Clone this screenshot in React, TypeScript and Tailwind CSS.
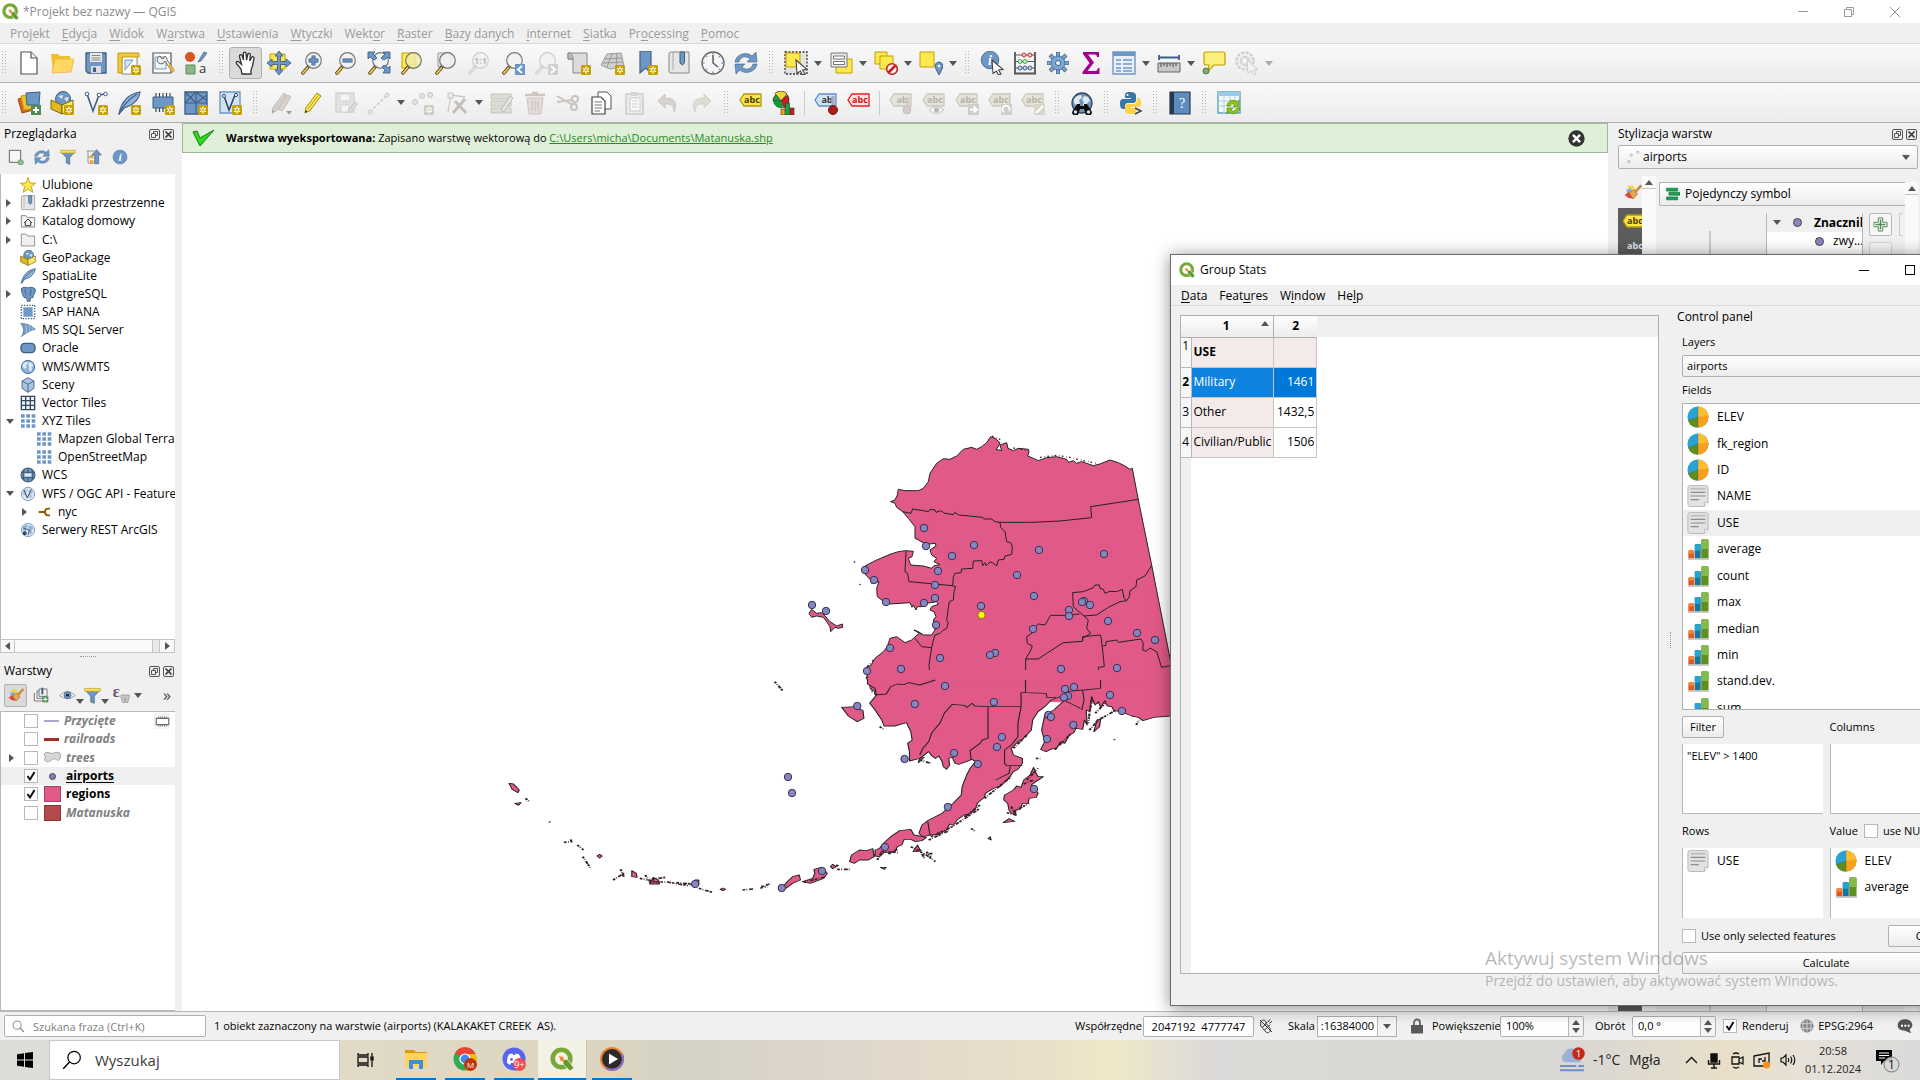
import type { ReactNode } from "react";

/* ---------- shared colours used inside drawings ---------- */
const BLUE = "#6d97c4";
const DARK = "#3f5f85";
const GOLD = "#c4a000";
const YEL = "#fce94f";
const GREY = "#6b6b6b";
const LIGHT = "#d3d3d3";

function Svg({ s = 24, children }: { s?: number; children: ReactNode }) {
  return (
    <svg width={s} height={s} viewBox="0 0 24 24" fill="none" className="shrink-0">
      {children}
    </svg>
  );
}

function Badge({ x = 14, y = 14, c = GOLD }: { x?: number; y?: number; c?: string }) {
  return (
    <g transform={`translate(${x} ${y})`}>
      <rect width="10" height="10" rx="1.5" fill={c} />
      <path d="M5 1.5V8.5M2 3.2L8 6.8M8 3.2L2 6.8" stroke="#fff" strokeWidth="1.3" />
      <circle cx="5" cy="5" r="1" fill={c} />
    </g>
  );
}

function Lens({ fill = "#eef1f3", pale = false, children }: { fill?: string; pale?: boolean; children?: ReactNode }) {
  return (
    <g>
      <path d="M8.5 15.5L3 22" stroke={pale ? "#c8c8c8" : "#222"} strokeWidth="3.4" strokeLinecap="round" />
      <path d="M7.5 16.8L3 22" stroke={pale ? "#e0e0e0" : "#f2c430"} strokeWidth="2" strokeLinecap="round" />
      <circle cx="13.5" cy="9.5" r="7.8" fill={fill} fillOpacity="0.85" stroke={pale ? "#cfcfcf" : "#777"} strokeWidth="1.2" />
      {children}
    </g>
  );
}

function Pencil({ body, edge, tip = "#333" }: { body: string; edge: string; tip?: string }) {
  return (
    <g>
      <path d="M5 16.5L16 2L20 5L9 19.5L4 22Z" fill={body} stroke={edge} strokeWidth="1" />
      <path d="M4 22L4.6 19L6.5 20.6Z" fill={tip} />
      <path d="M7 18L18 3.5" stroke={edge} strokeWidth="0.8" />
    </g>
  );
}

function Tag({ fill, edge, text, color, y = 3 }: { fill: string; edge: string; text: string; color: string; y?: number }) {
  return (
    <g>
      <path d={`M1 ${y + 6}L5 ${y}H22V${y + 12}H5Z`} fill={fill} stroke={edge} strokeWidth="1.3" />
      <text x="13" y={y + 9} fontSize="9" fontWeight="700" textAnchor="middle" fill={color} fontFamily="Open Sans, sans-serif">
        {text}
      </text>
    </g>
  );
}

function Globe({ fill = "#8fb2d8", edge = DARK, land = "#dfe9f4" }: { fill?: string; edge?: string; land?: string }) {
  return (
    <g>
      <circle cx="12" cy="12" r="10" fill={fill} stroke={edge} strokeWidth="1.3" />
      <path d="M4 8C6 5 9 4 11 4L12 7L9 9L10 12L7 15L4 12ZM14 5L18 6L20 10L17 12L18 16L15 19L13 14L14 11L12 9Z" fill={land} />
    </g>
  );
}

const cursor = <path d="M12 9L23 18.5L18.5 19L21 23L18.6 24L16.4 20L13 22.5Z" fill="#fff" stroke="#444" strokeWidth="1.1" />;

const icons: Record<string, ReactNode> = {
  newProject: (
    <>
      <path d="M4 1H14L20 7V23H4Z" fill="#fff" stroke="#555" strokeWidth="1.2" />
      <path d="M14 1V7H20" fill="#eee" stroke="#555" strokeWidth="1.2" />
    </>
  ),
  open: (
    <>
      <path d="M1 3H8L10 5H20V21H3Z" fill="#f2bf2c" />
      <path d="M5 8H24L21 21L2 22Z" fill="#ffd761" stroke="#e8b53a" strokeWidth="0.8" />
    </>
  ),
  save: (
    <>
      <path d="M2 2H22V22H4L2 20Z" fill={BLUE} stroke={DARK} strokeWidth="1.3" />
      <path d="M6 2H18V11H6Z" fill="#e8e8e8" />
      <path d="M7.5 4.5H16.5M7.5 7H16.5M7.5 9H16.5" stroke="#888" strokeWidth="1" />
      <path d="M7 15H17V22H7Z" fill="#ddd" />
      <path d="M9 16.5H12V21H9Z" fill={DARK} />
    </>
  ),
  layout: (
    <>
      <path d="M5 5H20V23H5Z" fill="#fff" stroke="#888" />
      <path d="M1 2H22V6H5V22H1Z" fill="#f1c64a" stroke={GOLD} />
      <path d="M8 9H16L8 19Z" fill="#dbe6f2" stroke={BLUE} />
      <Badge />
    </>
  ),
  layouts: (
    <>
      <path d="M2 2H20V22H2Z" fill="#fff" stroke="#555" strokeWidth="1.2" />
      <path d="M4 6H15V18H4Z" stroke={BLUE} fill="#eef3f9" />
      <path d="M9 5A4 4 0 1 0 14 10L21 21L23 19L16 9A4 4 0 0 0 14 5L12 8L10 7Z" fill="#eee" stroke="#666" />
      <path d="M17 15L21.5 22L24 20L19 13Z" fill="#e6b43a" />
    </>
  ),
  styles: (
    <>
      <circle cx="6" cy="6" r="5" fill="#d9541e" />
      <path d="M14 11L20 1L23 2L17 10Z" fill={BLUE} stroke={DARK} strokeWidth="0.7" />
      <path d="M2 14H11V23H2Z" fill="#8ab68a" stroke="#5b8c5a" />
      <text x="15" y="22" fontSize="13" fill="#333" fontFamily="Open Sans, sans-serif">a</text>
    </>
  ),
  hand: (
    <path
      d="M8 23L7 18L2.5 12.5C1.5 11 3.5 9.5 5 11L7.5 13.5L5.5 5.5C5.2 3.5 7.6 3 8.2 5L9.5 9L9.3 2.5C9.3 .7 12 .7 12.1 2.5L12.6 9L13.8 3.3C14.3 1.7 16.5 2.2 16.3 4L15.8 10L17.7 6.3C18.5 5 20.4 5.8 20 7.5L18.5 15L17 19V23Z"
      fill="#fff"
      stroke="#333"
      strokeWidth="1.3"
    />
  ),
  panSel: (
    <>
      <path d="M3 3H18V18H3Z" fill={YEL} stroke={GOLD} />
      <path
        d="M12 0L16 5H13.5V10.5H19V8L24 12L19 16V13.5H13.5V19H16L12 24L8 19H10.5V13.5H5V16L0 12L5 8V10.5H10.5V5H8Z"
        fill={BLUE}
        stroke={DARK}
        strokeWidth="0.9"
      />
    </>
  ),
  zoomIn: (
    <Lens>
      <path d="M13.5 4.5V14.5M8.5 9.5H18.5" stroke={DARK} strokeWidth="4" />
      <path d="M13.5 5V14M9 9.5H18" stroke={BLUE} strokeWidth="2.2" />
    </Lens>
  ),
  zoomOut: (
    <Lens>
      <path d="M8.5 9.5H18.5" stroke={DARK} strokeWidth="4" />
      <path d="M9 9.5H18" stroke={BLUE} strokeWidth="2.2" />
    </Lens>
  ),
  zoomFull: (
    <>
      <Lens />
      <path d="M1 1H8L6 3L10 7L7 9L3 6L1 8ZM23 1V8L21 6L17 9L14 7L18 3L16 1ZM23 22H16L18 19L15 16L17 14L21 17L23 15Z" fill={BLUE} stroke={DARK} strokeWidth="0.9" />
    </>
  ),
  zoomSel: (
    <>
      <path d="M2 2H15V17H2Z" fill={YEL} stroke={GOLD} />
      <Lens fill="#efeaa8" />
    </>
  ),
  zoomLayer: (
    <>
      <path d="M4 2H17V16H4Z" fill="#e4e4e4" stroke="#999" />
      <Lens />
    </>
  ),
  zoomNative: (
    <Lens pale>
      <text x="13.5" y="13" fontSize="9" fontWeight="700" textAnchor="middle" fill="#bbb" fontFamily="Open Sans, sans-serif">1:1</text>
    </Lens>
  ),
  zoomLast: (
    <>
      <Lens />
      <path d="M14 13H24V24H14Z" fill={BLUE} />
      <path d="M21 15L17 18.5L21 22" stroke="#fff" strokeWidth="2" />
    </>
  ),
  zoomNext: (
    <>
      <Lens pale />
      <path d="M14 13H24V24H14Z" fill="#d0d0d0" />
      <path d="M17 15L21 18.5L17 22" stroke="#fff" strokeWidth="2" />
    </>
  ),
  newMap: (
    <>
      <path d="M1 2H20V22H6V8H1Z" fill="#dcdcdc" stroke="#888" />
      <path d="M1 2C4 2 6 4 6 8H1Z" fill="#bbb" stroke="#888" />
      <Badge />
    </>
  ),
  new3d: (
    <>
      <path d="M6 3L20 2L23 15L9 18L0 14Z" fill="#cfcfcf" stroke="#999" />
      <path d="M4 8L21 7M2 12L22 11M11 3L6 16M16 2L15 17" stroke="#999" />
      <Badge />
    </>
  ),
  bookmarkNew: (
    <>
      <path d="M6 0H17V22L11.5 17L6 22Z" fill={BLUE} stroke={DARK} strokeWidth="1.2" />
      <Badge />
    </>
  ),
  bookmarks: (
    <>
      <path d="M2 3C2 1 4 1 6 1H22V22H4C2 22 2 21 2 20Z" fill="#e6e6e6" stroke="#888" />
      <path d="M6 1V19" stroke="#aaa" />
      <path d="M13 1H17.5V12L15.3 14L13 12Z" fill={BLUE} stroke={DARK} />
    </>
  ),
  clock: (
    <>
      <circle cx="12" cy="12" r="11" fill="#f5f5f5" stroke="#666" strokeWidth="1.3" />
      <path d="M12 4V12L17 16" stroke="#555" strokeWidth="1.4" />
      <path d="M12 1.5V3.5M12 20.5V22.5M1.5 12H3.5M20.5 12H22.5M5 5L6 6M19 5L18 6M5 19L6 18M19 19L18 18" stroke={BLUE} strokeWidth="1.5" />
    </>
  ),
  refresh: (
    <>
      <path d="M1 11C2 3 13 0 18 5L22 1L23 11H13L16 8C12 4 6 6 5 11Z" fill={BLUE} stroke={DARK} strokeWidth="0.6" />
      <path d="M23 13C22 21 11 24 6 19L2 23L1 13H11L8 16C12 20 18 18 19 13Z" fill={BLUE} stroke={DARK} strokeWidth="0.6" />
    </>
  ),
  select: (
    <>
      <path d="M1 1H23V23H1Z" stroke="#333" strokeWidth="1.3" strokeDasharray="2 1.5" fill="#e3e3e3" />
      <path d="M2 2H16V16H2Z" fill={YEL} stroke={GOLD} />
      {cursor}
    </>
  ),
  selForm: (
    <>
      <path d="M7 8H23V22H7Z" fill={YEL} stroke={GOLD} />
      <path d="M2 2H18V16H2Z" fill="#eee" stroke="#777" />
      <path d="M4.5 5H15.5V8H4.5ZM4.5 10.5H15.5V13.5H4.5Z" stroke="#777" fill="#fff" />
    </>
  ),
  deselect: (
    <>
      <path d="M1 1H13V13H1Z" fill={YEL} stroke={GOLD} />
      <path d="M6 5H19V18H6Z" fill={YEL} stroke={GOLD} />
      <circle cx="18" cy="18" r="5.3" fill="#fff" stroke="#cc1f1f" strokeWidth="1.6" />
      <path d="M14.5 21.5L21.5 14.5" stroke="#cc1f1f" strokeWidth="2.6" />
    </>
  ),
  selLoc: (
    <>
      <path d="M1 1H15V16H1Z" fill={YEL} stroke={GOLD} />
      <path d="M20 24L16.5 17A4 4 0 1 1 23.5 17Z" fill={BLUE} stroke={DARK} />
      <circle cx="20" cy="15" r="1.3" fill="#fff" />
    </>
  ),
  identify: (
    <>
      <circle cx="10" cy="9" r="8.8" fill={BLUE} stroke={DARK} strokeWidth="0.8" />
      <text x="10" y="14" fontSize="14" fontStyle="italic" fontWeight="700" fill="#fff" textAnchor="middle" fontFamily="Liberation Serif, serif">i</text>
      {cursor}
    </>
  ),
  abacus: (
    <>
      <path d="M2 1V22M22 1V22M1 22.5H23" stroke="#555" strokeWidth="1.8" />
      <path d="M2 4H22M2 10.5H22M2 17H22" stroke="#555" />
      <circle cx="11" cy="4" r="2" fill="#f5c0c0" stroke="#c33" />
      <circle cx="17" cy="4" r="2" fill="#f5c0c0" stroke="#c33" />
      <circle cx="7" cy="10.5" r="2" fill="#c8f0c0" stroke="#4a4" />
      <circle cx="12" cy="10.5" r="2" fill="#c8f0c0" stroke="#4a4" />
      <circle cx="7" cy="17" r="2" fill="#c5daf2" stroke={DARK} />
      <circle cx="12" cy="17" r="2" fill="#c5daf2" stroke={DARK} />
      <circle cx="17" cy="17" r="2" fill="#c5daf2" stroke={DARK} />
    </>
  ),
  gear: (
    <>
      <path d="M12 1V23M1 12H23M4 4L20 20M20 4L4 20" stroke={DARK} strokeWidth="4" />
      <path d="M12 1.5V22.5M1.5 12H22.5M4.5 4.5L19.5 19.5M19.5 4.5L4.5 19.5" stroke="#7ba5d3" strokeWidth="2.8" />
      <circle cx="12" cy="12" r="7" fill="#7ba5d3" stroke={DARK} strokeWidth="0.7" />
      <circle cx="12" cy="12" r="2.5" fill="#f4f4f4" stroke={DARK} />
    </>
  ),
  sigma: <path d="M4 1H20V6H18C18 4 17 3.5 15 3.5H9L15 11.5L8.5 20H16C18 20 18.5 19 19 17H20.5V23H3.5V21L10.5 12L4 3Z" fill="#a3008f" />,
  table: (
    <>
      <path d="M1 1H23V23H1Z" fill="#e9f0f8" stroke={BLUE} strokeWidth="1.4" />
      <path d="M1 1H23V5H1Z" fill={BLUE} />
      <path d="M4 9H9M4 13H9M4 17H9M4 20H9M11 9H20M11 13H20M11 17H20M11 20H20" stroke={BLUE} strokeWidth="1.5" />
    </>
  ),
  ruler: (
    <>
      <path d="M2 4V9M22 4V9M2 6.5H22" stroke={DARK} strokeWidth="1.8" />
      <path d="M1 12H23V21H1Z" fill="#c9c9c9" stroke="#666" />
      <path d="M4 12V16M7 12V15M10 12V16M13 12V15M16 12V16M19 12V15" stroke="#444" />
    </>
  ),
  tip: (
    <>
      <path d="M4 1H21Q23 1 23 3V12Q23 14 21 14H12L6 20L7 14H4Q2 14 2 12V3Q2 1 4 1Z" fill="#fcee7c" stroke={GOLD} strokeWidth="1.2" />
      <circle cx="4" cy="20" r="3" fill="#7bab6f" stroke="#4f7d45" />
    </>
  ),
  action: (
    <>
      <circle cx="10" cy="10" r="8.5" stroke="#d0d0d0" strokeWidth="2.5" strokeDasharray="3 1.5" fill="#efefef" />
      <circle cx="10" cy="10" r="4.5" fill="#e2e2e2" stroke="#ccc" />
      <path d="M8.5 7.5L13 10L8.5 12.5Z" fill="#fff" />
      <path d="M12 9L23 18.5L18.5 19L21 23L18.6 24L16.4 20L13 22.5Z" fill="#f2f2f2" stroke="#ccc" />
    </>
  ),
  dataSrc: (
    <>
      <path d="M1 8L12 5L16 19L5 22Z" fill="#d9641e" stroke="#9c4712" />
      <path d="M4 5L15 3L18 17L7 19Z" fill="#e8c030" stroke={GOLD} />
      <path d="M9 2L23 1L22 14L10 14Z" fill={BLUE} stroke={DARK} />
      <path d="M14 14H24V24H14Z" fill="#4f8d55" />
      <path d="M19 16V22M16 19H22" stroke="#fff" strokeWidth="2" />
    </>
  ),
  geopackage: (
    <>
      <circle cx="13" cy="8" r="7.5" fill={BLUE} stroke={DARK} />
      <path d="M8 5L13 4L12 8ZM14 7L19 6L17 11Z" fill="#dfe9f4" />
      <path d="M1 9L12 14V23L1 18Z" fill="#e0b91b" stroke="#7d6608" />
      <path d="M23 9L12 14V23L23 18Z" fill="#fbe865" stroke="#7d6608" />
    </>
  ),
  newShape: (
    <>
      <path d="M3 3L9 20L15 4L21 3" stroke={DARK} strokeWidth="1.6" />
      <circle cx="3" cy="3" r="1.8" fill="#fff" stroke={DARK} />
      <circle cx="15" cy="4" r="1.8" fill="#fff" stroke={DARK} />
      <circle cx="21.5" cy="3" r="1.8" fill="#fff" stroke={DARK} />
    </>
  ),
  feather: (
    <>
      <path d="M2 23C4 12 10 3 23 1C22 8 17 14 7 17Z" fill="#8fb3da" stroke={DARK} strokeWidth="1.2" />
      <path d="M2 23C6 14 12 8 20 3" stroke={DARK} strokeWidth="1.2" />
    </>
  ),
  memory: (
    <>
      <path d="M5 2V21M8.5 2V21M12 2V21M15.5 2V21M19 2V21" stroke="#444" strokeWidth="1.2" />
      <path d="M2 6H22V17H2Z" fill={BLUE} stroke={DARK} />
    </>
  ),
  mesh: (
    <>
      <path d="M1 1H23V23H1Z" fill={BLUE} stroke={DARK} strokeWidth="1.4" />
      <path d="M1 12H23M12 1V23M1 1L12 12M12 1L1 12M12 12L23 4M12 1L23 10" stroke={DARK} strokeWidth="1.1" />
    </>
  ),
  virtual: (
    <>
      <path d="M2 1H22V22H2Z" fill="#d4e2f1" stroke={BLUE} strokeWidth="1.4" />
      <path d="M6 5L11 19L17 4" stroke="#33475f" strokeWidth="1.6" />
      <circle cx="6" cy="5" r="1.6" fill="#fff" stroke="#33475f" />
      <circle cx="18" cy="4" r="1.6" fill="#fff" stroke="#33475f" />
    </>
  ),
  pencils: (
    <>
      <Pencil body="#d9d3ce" edge="#c2bbb6" tip="#999" />
      <path d="M10 18L20 4L23 6L14 20Z" fill="#d9d3ce" stroke="#c2bbb6" />
      <path d="M18 20H24L21 23.5Z" fill="#999" />
    </>
  ),
  pencil: <Pencil body={YEL} edge="#a38a10" />,
  saveGrey: (
    <>
      <path d="M2 2H20V21H2Z" fill="#e2e2e2" stroke={LIGHT} strokeWidth="1.5" />
      <path d="M6 3H16V10H6ZM7 14H15V21H7Z" fill="#f5f5f5" stroke={LIGHT} />
      <path d="M14 20L21 11L23.5 13L16 22Z" fill="#ddd" stroke="#c4c4c4" />
    </>
  ),
  lineGrey: (
    <>
      <path d="M3 21L20 4" stroke="#c8c8c8" strokeWidth="1.5" strokeDasharray="3 2" />
      <circle cx="3" cy="21" r="2" fill="#e5e5e5" stroke="#c8c8c8" />
      <circle cx="20" cy="4" r="2" fill="#e5e5e5" stroke="#c8c8c8" />
    </>
  ),
  pointsGrey: (
    <>
      <circle cx="10" cy="5" r="2.6" fill="#e2e2e2" stroke="#c8c8c8" />
      <circle cx="18" cy="4" r="2.6" fill="#e2e2e2" stroke="#c8c8c8" />
      <circle cx="3" cy="11" r="2.6" fill="#e2e2e2" stroke="#c8c8c8" />
      <Badge c="#d0ccc4" x={12} />
    </>
  ),
  vertexGrey: (
    <>
      <path d="M3 21L6 4L20 6" stroke="#c8c8c8" strokeWidth="1.3" />
      <path d="M3 2H8V7H3Z" fill="#eee" stroke="#c0c0c0" />
      <path d="M8 22L20 8M10 10L21 22" stroke="#c5bfba" strokeWidth="3" />
    </>
  ),
  attrGrey: (
    <>
      <path d="M1 3H21V8H1ZM1 10H21V15H1ZM1 17H21V22H1Z" fill="#dedcd6" stroke="#c6c3ba" />
      <path d="M11 19L20 5L23 7L14 21Z" fill="#e6e6e6" stroke="#bbb" />
    </>
  ),
  trashGrey: (
    <>
      <path d="M4 7H20L18 23H6Z" fill="#e4dcd9" stroke="#cfc4c0" />
      <path d="M2 4H22M9 2H15" stroke="#cfc4c0" strokeWidth="2.5" />
      <path d="M9 10V20M12 10V20M15 10V20" stroke="#cfc4c0" strokeWidth="1.3" />
    </>
  ),
  cutGrey: (
    <>
      <path d="M1 5L17 14M1 11L17 9" stroke="#c8c4c0" strokeWidth="2" />
      <circle cx="19" cy="8" r="3" stroke="#c8c4c0" strokeWidth="2" />
      <circle cx="18" cy="16" r="3" stroke="#c8c4c0" strokeWidth="2" />
    </>
  ),
  copy: (
    <>
      <path d="M9 1H18L22 5V18H9Z" fill="#fff" stroke="#555" />
      <path d="M3 6H12L16 10V23H3Z" fill="#fff" stroke="#444" strokeWidth="1.2" />
      <path d="M5.5 11H13M5.5 14H13M5.5 17H13M5.5 20H11" stroke="#777" />
    </>
  ),
  pasteGrey: (
    <>
      <path d="M3 3H20V23H3Z" fill="#ececec" stroke="#ccc" strokeWidth="1.5" />
      <path d="M7 7H17V20H7Z" fill="#fafafa" stroke="#ccc" />
      <path d="M9 10H15M9 13H15M9 16H15" stroke="#ccc" />
      <path d="M8 1H15V5H8Z" fill="#d5d5d5" />
    </>
  ),
  undo: <path d="M2 10L9 3V7.5C18 6 22 12 18 21C18 15 15 12.5 9 13V17Z" fill="#d8d2cd" stroke="#ccc5bf" />,
  redo: <path d="M22 10L15 3V7.5C6 6 2 12 6 21C6 15 9 12.5 15 13V17Z" fill="#dadfd6" stroke="#cfd2cb" />,
  label: <Tag fill="#fbe44c" edge="#b39a0c" text="abc" color="#4a3d00" />,
  diagram: (
    <>
      <path d="M9 2V10H1A8 8 0 0 1 9 2Z" fill="#1fa33a" stroke="#222" strokeWidth="0.7" />
      <path d="M9 10L3 2.5A8 8 0 0 1 15 3Z" fill="#f3d33c" stroke="#222" strokeWidth="0.7" />
      <path d="M9 10L15.5 4A9 9 0 0 1 12 17Z" fill="#cf1c1c" stroke="#222" strokeWidth="0.7" />
      <path d="M1 10H9L11 17A8 8 0 0 1 1 10Z" fill="#11953a" />
      <path d="M9 18H13V24H9Z" fill="#f3a41c" stroke="#333" strokeWidth="0.6" />
      <path d="M13.5 12H17.5V24H13.5Z" fill="#13a538" stroke="#333" strokeWidth="0.6" />
      <path d="M18 17H22V24H18Z" fill="#cf1c1c" stroke="#333" strokeWidth="0.6" />
    </>
  ),
  labelPin: (
    <>
      <Tag fill="#cfe4fa" edge="#5a8fd0" text="ab" color="#333" />
      <path d="M19 5V17" stroke="#aab" strokeWidth="3.5" />
      <circle cx="19" cy="19" r="4.5" fill="#a8201a" stroke="#761310" />
    </>
  ),
  labelRed: <Tag fill="#fbe3e3" edge="#ee1c1c" text="abc" color="#d11" />,
  lg1: (
    <>
      <Tag fill="#e4e4da" edge="#cbc9bb" text="ab" color="#b5b3a8" />
      <circle cx="18" cy="19" r="4" fill="#d5cccc" stroke="#c9bdbd" />
      <path d="M19 6V16" stroke="#d0caca" strokeWidth="3" />
    </>
  ),
  lg2: (
    <>
      <Tag fill="#e4e4da" edge="#cbc9bb" text="abc" color="#b5b3a8" />
      <path d="M7 19Q14 12 22 19Q14 26 7 19Z" fill="#f4f4f4" stroke="#c4c4c4" />
      <circle cx="14.5" cy="19" r="2.5" fill="#b9b9b9" />
    </>
  ),
  lg3: (
    <>
      <Tag fill="#e4e4da" edge="#cbc9bb" text="abc" color="#b5b3a8" />
      <path d="M13 13H24V24H13Z" fill="#cfcfc8" />
      <path d="M15 18.5H21M18.5 15.5L22 18.5L18.5 21.5" stroke="#fff" strokeWidth="1.8" />
    </>
  ),
  lg4: (
    <>
      <Tag fill="#e4e4da" edge="#cbc9bb" text="abc" color="#b5b3a8" />
      <path d="M13 13H24V24H13Z" fill="#cfcfc8" />
      <path d="M16 21A3.5 3.5 0 1 1 21 20" stroke="#fff" strokeWidth="1.8" />
    </>
  ),
  lg5: (
    <>
      <Tag fill="#e4e4da" edge="#cbc9bb" text="abc" color="#b5b3a8" />
      <path d="M13 13H24V24H13Z" fill="#d9d5c8" />
      <path d="M15 22L22 15" stroke="#fff" strokeWidth="2" />
    </>
  ),
  metasearch: (
    <>
      <Globe fill="#6f94bc" edge="#2d4765" />
      <path d="M7 13H10V15H14V13H17L22 21A3.5 3.5 0 1 1 15 21L14 18H10L9 21A3.5 3.5 0 1 1 2 21Z" fill="#0a0a0a" />
      <circle cx="5.5" cy="21" r="1.8" fill="#ddd" />
      <circle cx="18.5" cy="21" r="1.8" fill="#ddd" />
    </>
  ),
  python: (
    <>
      <path d="M11 1C6 1 6 3 6 5V7H12V8H4C1 8 1 11 1 13C1 16 2 18 4 18H6V15C6 13 7 12 9 12H14C16 12 17 11 17 9V5C17 2 15 1 11 1Z" fill="#3b76a8" />
      <path d="M12 23C17 23 17 21 17 19V17H11V16H19C22 16 22 13 22 11C22 8 21 7 19 7H18V10C18 12 16 13 14 13H9C7 13 6 14 6 16V19C6 22 8 23 12 23Z" fill="#ffd242" />
      <circle cx="8.5" cy="4" r="1.1" fill="#fff" />
      <path d="M16 17L22 20L16 23" stroke="#444" strokeWidth="1.5" />
    </>
  ),
  help: (
    <>
      <path d="M2 1H22V23H2Z" fill="#5f8cc0" stroke="#28384c" strokeWidth="1.2" />
      <path d="M2 1H6V23H2Z" fill="#28384c" />
      <text x="14" y="17" fontSize="14" fill="#fff" textAnchor="middle" fontFamily="Liberation Serif, serif">?</text>
    </>
  ),
  groupStats: (
    <>
      <path d="M1 1H23V22H1Z" fill="#f4fafc" stroke="#5aa5bd" strokeWidth="1.4" />
      <path d="M1 1H23V5H1Z" fill="#9dcbe8" />
      <path d="M1 10H23M1 15H23M7 5V22M13 5V22M18 5V22" stroke="#a7d0dc" />
      <path d="M10 15C10 9 18 8 20 11L22 9V16H16L18 14C16 12 13 13 13 15ZM23 17C22 23 14 24 12 21L10 23V17H16L14 19C16 21 19 20 20 17Z" fill="#8fc31c" stroke="#5d8c0d" strokeWidth="0.7" />
    </>
  ),
  star: <path d="M12 1L15 9L23.5 9.3L17 14.5L19.3 23L12 18L4.7 23L7 14.5L.5 9.3L9 9Z" fill="#fce94f" stroke="#b59a12" strokeWidth="1.3" />,
  home: (
    <>
      <path d="M2 4H9L11 7H22V21H2Z" fill="#f3f3f3" stroke="#777" strokeWidth="1.3" />
      <path d="M6 15L12 9L18 15M8 14V19H16V14" stroke="#333" strokeWidth="1.5" />
    </>
  ),
  folder: <path d="M2 3H9L11 6H22V21H2Z" fill="#f1f1f1" stroke="#888" strokeWidth="1.3" />,
  elephant: (
    <>
      <path d="M2 4C5 1 10 2 12 3C15 1 21 2 23 5C23 9 22 13 19 15L20 17L16 18L15 23H11L10 17L7 18C4 14 2 9 2 4Z" fill={BLUE} stroke={DARK} strokeWidth="1.4" />
      <path d="M8 4C7 8 8 11 10 14M16 4C17 8 16 12 15 15" stroke={DARK} strokeWidth="1.3" />
    </>
  ),
  hana: (
    <>
      <path d="M2 2H22V22H2Z" stroke={DARK} strokeWidth="2" strokeDasharray="2 2" />
      <path d="M5 5H19V19H5Z" fill={BLUE} />
    </>
  ),
  mssql: (
    <>
      <path d="M1 2C10 2 17 5 23 11C14 13 9 17 2 22C7 14 6 9 1 2Z" fill={BLUE} stroke={DARK} strokeWidth="0.8" />
      <path d="M8 4C10 8 10 12 9 16M13 5C15 8 15 11 14 14M18 8C19 9 19 10 18 12" stroke="#dbe7f3" />
    </>
  ),
  oracle: <rect x="1.5" y="5" width="21" height="14" rx="5.5" fill={BLUE} stroke={DARK} strokeWidth="2" />,
  wms: <Globe />,
  scene: (
    <>
      <path d="M12 1L21 6V17L12 23L3 17V6Z" fill="#a9c4e2" stroke={DARK} strokeWidth="1.3" />
      <path d="M3 6L12 11L21 6M12 11V23" stroke={DARK} strokeWidth="1.3" />
    </>
  ),
  vtiles: (
    <>
      <path d="M2 2H22V22H2Z" fill="#eef3f8" stroke="#33475f" strokeWidth="2" />
      <path d="M2 8.5H22M2 15.5H22M8.5 2V22M15.5 2V22" stroke="#33475f" strokeWidth="2" />
    </>
  ),
  xyz: (
    <path
      d="M1.5 2H7V7H1.5ZM9.5 2H15V7H9.5ZM17.5 2H23V7H17.5ZM1.5 9.5H7V14.5H1.5ZM9.5 9.5H15V14.5H9.5ZM17.5 9.5H23V14.5H17.5ZM1.5 17H7V22H1.5ZM9.5 17H15V22H9.5ZM17.5 17H23V22H17.5Z"
      fill={BLUE}
    />
  ),
  wcs: (
    <>
      <circle cx="12" cy="12" r="10.5" fill={BLUE} stroke="#33475f" strokeWidth="1.3" />
      <path d="M2 8H22M2 16H22M12 2V22M7 3C4 9 4 15 7 21M17 3C20 9 20 15 17 21" stroke="#33475f" strokeWidth="1.2" />
      <path d="M7 9.5H17V14.5H7Z" fill="#dbe7f3" />
    </>
  ),
  wfs: (
    <>
      <Globe fill="#dfe8f2" edge={BLUE} land="#b5cae1" />
      <path d="M6 6L11 18L17 5" stroke="#33475f" strokeWidth="1.5" />
    </>
  ),
  conn: <path d="M4 12H13M21 7H18C12 7 12 17 18 17H21" stroke="#8f5902" strokeWidth="2.8" />,
  arcgis: (
    <>
      <Globe fill="#dfe8f2" edge={BLUE} land="#8fb2d8" />
      <circle cx="7" cy="17" r="3" fill="#33475f" />
      <path d="M5 9L14 12L12 20" stroke="#33475f" strokeWidth="1.3" />
    </>
  ),
  addSel: (
    <>
      <path d="M2 2H19V20H2Z" fill="#f6f6f6" stroke="#666" strokeWidth="1.5" />
      <circle cx="19" cy="20" r="4" fill="#8fbc8f" stroke="#4f8d55" />
    </>
  ),
  funnel: (
    <>
      <path d="M2 5H22L14.5 13V23L9.5 21V13Z" fill={BLUE} stroke={DARK} />
      <path d="M1 2H23V6H1Z" fill="#f4e36a" stroke={GOLD} />
    </>
  ),
  collapse: (
    <>
      <path d="M1 3H13M3 3V21M3 12H10M3 21H12" stroke="#888" strokeWidth="1.3" />
      <path d="M6 9H11V14H6ZM6 17H11V22H6Z" fill="#f2a33a" />
      <path d="M16 1L23 9H19V22H13V9H9Z" fill={BLUE} stroke={DARK} />
    </>
  ),
  info: (
    <>
      <circle cx="12" cy="12" r="10.5" fill={BLUE} stroke={DARK} strokeWidth="0.7" />
      <text x="12" y="18" fontSize="17" fontStyle="italic" fontWeight="700" fill="#fff" textAnchor="middle" fontFamily="Liberation Serif, serif">i</text>
    </>
  ),
  brush: (
    <>
      <path d="M4 4L12 3L15 9L8 11Z" fill="#f5d547" />
      <path d="M3 9L9 7L12 14L5 15Z" fill="#7fb0e8" />
      <path d="M1 16L6 12L14 21L6 20Z" fill="#e2453c" />
      <path d="M7 13L14 9L18 15L12 21Z" fill="#e3a857" stroke="#a8712a" />
      <path d="M15 12L23 3" stroke="#c98a3a" strokeWidth="3.5" />
    </>
  ),
  addGroup: (
    <>
      <path d="M2 9V21H14M6 6V17H18V6Z" stroke="#666" strokeWidth="1.3" fill="#f3f3f3" />
      <path d="M9 3V14H21V3Z" stroke="#666" strokeWidth="1.3" fill="#f3f3f3" />
      <path d="M14 1V11" stroke={DARK} strokeWidth="3" />
      <path d="M14 14H23V23H14Z" fill="#4f8d55" />
      <path d="M18.5 15.5V21.5M15.5 18.5H21.5" stroke="#fff" strokeWidth="1.8" />
    </>
  ),
  eye: (
    <>
      <path d="M1 12Q12 1 23 12Q12 21 1 12Z" fill="#f7f7f7" stroke="#999" strokeWidth="1.3" />
      <circle cx="12" cy="11.5" r="5" fill={BLUE} stroke={DARK} />
      <circle cx="12" cy="11.5" r="2" fill="#222" />
    </>
  ),
  epsilon: (
    <>
      <text x="1" y="14" fontSize="22" fontWeight="700" fill="#75507b" fontFamily="Liberation Serif, serif">ε</text>
      <path d="M12 12H23V15L21 22H18V16H17V22H14L12 15Z" fill="#c5c5c5" stroke="#999" />
    </>
  ),
  trees: <path d="M1 6C5 3 9 7 13 6C17 4 22 4 23 7C24 13 22 16 19 16C15 13 12 13 9 17C5 19 1 18 1 14C3 11 0 9 1 6Z" fill="#d8d8d8" stroke="#888" />,
  pie: (
    <>
      <circle cx="12" cy="12" r="11.5" fill="#2aa3d4" />
      <path d="M12 .5A11.5 11.5 0 0 1 12 23.5Z" fill="#f9a11b" />
      <path d="M12 .5A11.5 11.5 0 0 1 23.3 10L12 12Z" fill="#fbbd35" />
      <path d="M12 12V23.5A11.5 11.5 0 0 1 1.2 16Z" fill="#5f8d1f" />
      <path d="M12 .5V23.5M12 12L1.2 16" stroke="#444" strokeOpacity="0.35" strokeWidth="0.8" />
    </>
  ),
  note: (
    <>
      <path d="M1 3Q1 .5 3.5 .5H20.5Q23 .5 23 3V19L19 23.5H3.5Q1 23.5 1 21Z" fill="#e2e2e2" stroke="#b5b5b5" />
      <path d="M4 4H20" stroke="#c0c0c0" strokeWidth="2" />
      <path d="M4 8H20M4 12H20M4 16H13" stroke="#8d8d8d" strokeWidth="1.2" />
      <path d="M19 23.5V19H23" fill="#fff" stroke="#b5b5b5" />
    </>
  ),
  bars: (
    <>
      <path d="M1 23H24" stroke="#bbb" strokeWidth="1.5" />
      <path d="M1.5 22V15Q1.5 13 3.5 13H6Q8 13 8 15V22Z" fill="#e0591f" />
      <path d="M1.5 17V15Q1.5 13 3.5 13H6Q8 13 8 15V17Z" fill="#f08a3c" />
      <path d="M8.5 22V8Q8.5 6.5 10 6.5H13.5Q15 6.5 15 8V22Z" fill="#14779f" />
      <path d="M8.5 14V8Q8.5 6.5 10 6.5H13.5Q15 6.5 15 8V14Z" fill="#27a3d8" />
      <path d="M15.5 22V3Q15.5 1 17.5 1H21.5Q23.5 1 23.5 3V22Z" fill="#5f8f1e" />
      <path d="M15.5 12V3Q15.5 1 17.5 1H21.5Q23.5 1 23.5 3V12Z" fill="#86b952" />
    </>
  ),
  single: <path d="M1 2H20V7H1ZM5 9H24V14H5ZM1 17H20V22H1Z" fill="#14a650" stroke="#0b5a2b" />,
  points: (
    <>
      <circle cx="5" cy="20" r="2" stroke="#888" />
      <circle cx="9" cy="9" r="2" stroke="#888" />
      <circle cx="20" cy="4" r="2" stroke="#888" />
    </>
  ),
  plus: (
    <>
      <path d="M8.5 1.5H15.5V8.5H22.5V15.5H15.5V22.5H8.5V15.5H1.5V8.5H8.5Z" fill="#fff" stroke="#4f8d55" strokeWidth="1.6" />
      <path d="M12 4V20M4 12H20" stroke="#4f8d55" strokeWidth="2.5" />
    </>
  ),
  chip: (
    <>
      <path d="M6 4V20M9 4V20M12 4V20M15 4V20M18 4V20" stroke={GREY} strokeWidth="1.3" />
      <path d="M2 7H22V17H2Z" fill="#fff" stroke={GREY} strokeWidth="1.8" />
    </>
  ),
  qgis: (
    <>
      <circle cx="11.5" cy="11.5" r="8.8" stroke="#78a838" strokeWidth="4.6" />
      <path d="M13 13L17 12L24 21L20 24L13 17Z" fill="#5f9a2b" stroke="#fff" strokeWidth="0.7" />
      <path d="M9 9L13.5 10L14 15L10.5 13.5Z" fill="#f08a24" />
    </>
  ),
  search: (
    <>
      <circle cx="14.5" cy="9" r="7.5" stroke="currentColor" strokeWidth="1.5" />
      <path d="M9 14.5L1.5 22.5" stroke="currentColor" strokeWidth="1.7" />
    </>
  ),
  statusSearch: (
    <>
      <circle cx="9.5" cy="9.5" r="7.5" stroke="#888" strokeWidth="1.8" />
      <path d="M15 15L22 22" stroke="#888" strokeWidth="2.5" />
    </>
  ),
};

const badged = new Set(["geopackageNew", "newShape", "featherNew", "memory", "mesh", "virtual"]);

function Icon({ name, s = 24 }: { name: string; s?: number }) {
  const base = name.replace("geopackageNew", "geopackage").replace("featherNew", "feather");
  return (
    <Svg s={s}>
      {icons[base]}
      {badged.has(name) && <Badge />}
    </Svg>
  );
}

function Down({ c = "#555" }: { c?: string }) {
  return (
    <svg width="8" height="5" viewBox="0 0 8 5" className="shrink-0">
      <path d="M0 0H8L4 5Z" fill={c} />
    </svg>
  );
}
function Up() {
  return (
    <svg width="8" height="5" viewBox="0 0 8 5" className="shrink-0">
      <path d="M0 5H8L4 0Z" fill="#555" />
    </svg>
  );
}
function Side({ flip = false }: { flip?: boolean }) {
  return (
    <svg width="5" height="8" viewBox="0 0 5 8" className="shrink-0">
      <path d={flip ? "M5 0V8L0 4Z" : "M0 0V8L5 4Z"} fill="#555" />
    </svg>
  );
}

function Handle() {
  return (
    <svg width="4" height="24" viewBox="0 0 4 24" className="mx-[6px] shrink-0">
      <path d="M.5 0V24M3.5 0V24" stroke="#b4b4b4" strokeDasharray="1 2" />
    </svg>
  );
}

function Tool({ name, drop, on, pale }: { name: string; drop?: boolean; on?: boolean; pale?: boolean }) {
  return (
    <button
      aria-label={name}
      className={
        on
          ? "flex h-8 items-center justify-center rounded-[3px] border border-[#b0b0b0] bg-[#dadada]"
          : "flex h-8 items-center"
      }
    >
      <span className="flex w-[33px] justify-center">
        <Icon name={name} />
      </span>
      {drop && (
        <span className="flex w-3 justify-center">
          <Down c={pale ? "#aaa" : "#555"} />
        </span>
      )}
    </button>
  );
}

function Menu({ text, at }: { text: string; at: number }) {
  return (
    <button>
      {text.slice(0, at)}
      <span className="underline underline-offset-2">{text[at]}</span>
      {text.slice(at + 1)}
    </button>
  );
}

function Check({ id, checked }: { id: string; checked?: boolean }) {
  return (
    <span className="relative flex size-[14px] shrink-0">
      <input id={id} type="checkbox" defaultChecked={checked} className="peer size-[14px] appearance-none border border-[#b8b8b8] bg-white" />
      <svg viewBox="0 0 14 14" className="pointer-events-none absolute inset-0 hidden peer-checked:block">
        <path d="M3.5 7L6 10.5L10.5 3" stroke="#111" strokeWidth="2" fill="none" />
      </svg>
    </span>
  );
}

function PanelTitle({ text }: { text: string }) {
  return (
    <div className="flex h-[22px] shrink-0 items-center text-xs">
      <h2 className="grow">{text}</h2>
      <button aria-label="Float" className="mr-[3px] flex size-[11px] items-center justify-center rounded-[2px] border border-[#555]">
        <svg width="7" height="7" viewBox="0 0 7 7" fill="none" stroke="#555">
          <path d="M2.5 2.5V.5H6.5V4.5H4.5M.5 2.5H4.5V6.5H.5Z" />
        </svg>
      </button>
      <button aria-label="Close" className="mr-[1px] flex size-[11px] items-center justify-center rounded-[2px] border border-[#555]">
        <svg width="7" height="7" viewBox="0 0 7 7" stroke="#444" strokeWidth="1.7">
          <path d="M.5 .5L6.5 6.5M6.5 .5L.5 6.5" />
        </svg>
      </button>
    </div>
  );
}

const menus: [string, number][] = [
  ["Projekt", 3], ["Edycja", 0], ["Widok", 0], ["Warstwa", 1], ["Ustawienia", 0], ["Wtyczki", 0], ["Wektor", 4],
  ["Raster", 0], ["Bazy danych", 0], ["internet", 0], ["Siatka", 0], ["Processing", 2], ["Pomoc", 0],
];

const tree: { t: string; i: string; a?: "r" | "d"; sub?: boolean }[] = [
  { t: "Ulubione", i: "star" },
  { t: "Zakładki przestrzenne", i: "bookmarks", a: "r" },
  { t: "Katalog domowy", i: "home", a: "r" },
  { t: "C:\\", i: "folder", a: "r" },
  { t: "GeoPackage", i: "geopackage" },
  { t: "SpatiaLite", i: "feather" },
  { t: "PostgreSQL", i: "elephant", a: "r" },
  { t: "SAP HANA", i: "hana" },
  { t: "MS SQL Server", i: "mssql" },
  { t: "Oracle", i: "oracle" },
  { t: "WMS/WMTS", i: "wms" },
  { t: "Sceny", i: "scene" },
  { t: "Vector Tiles", i: "vtiles" },
  { t: "XYZ Tiles", i: "xyz", a: "d" },
  { t: "Mapzen Global Terrain", i: "xyz", sub: true },
  { t: "OpenStreetMap", i: "xyz", sub: true },
  { t: "WCS", i: "wcs" },
  { t: "WFS / OGC API - Features", i: "wfs", a: "d" },
  { t: "nyc", i: "conn", a: "r", sub: true },
  { t: "Serwery REST ArcGIS", i: "arcgis" },
];

function Browser() {
  return (
    <section className="flex h-[530px] shrink-0 flex-col">
      <div className="pl-1"><PanelTitle text="Przeglądarka" /></div>
      <div className="mb-[5px] flex h-6 items-center gap-[10px] pl-2">
        {["addSel", "refresh", "funnel", "collapse", "info"].map((n) => (
          <button key={n} aria-label={n}>
            <Icon name={n} s={16} />
          </button>
        ))}
      </div>
      <div className="grow overflow-hidden border-l border-[#b8b8b8] bg-white">
        <ul className="grid h-[365px] auto-rows-fr pt-[2px]">
          {tree.map((n) => (
            <li key={n.t} className={n.sub ? "flex items-center pl-[21px] whitespace-nowrap" : "flex items-center pl-[5px] whitespace-nowrap"}>
              <span className="flex w-[14px] shrink-0">{n.a === "r" ? <Side /> : n.a === "d" ? <Down /> : null}</span>
              <Icon name={n.i} s={16} />
              <span className="ml-[6px] text-xs">{n.t}</span>
            </li>
          ))}
        </ul>
      </div>
      <div className="flex h-[14px] shrink-0 border border-[#c4c4c4] bg-[#f9f9f9]">
        <button aria-label="Scroll left" className="flex w-[14px] items-center justify-center border-r border-[#c4c4c4]"><Side flip /></button>
        <div className="grow" />
        <div className="w-2 border-x border-[#c4c4c4] bg-[#e8e8e8]" />
        <button aria-label="Scroll right" className="flex w-[14px] items-center justify-center"><Side /></button>
      </div>
    </section>
  );
}

const layers = [
  { t: "Przycięte", s: "line", on: false },
  { t: "railroads", s: "rail", on: false },
  { t: "trees", s: "trees", on: false },
  { t: "airports", s: "dot", on: true },
  { t: "regions", s: "regions", on: true },
  { t: "Matanuska", s: "mat", on: false },
];

function Swatch({ kind }: { kind: string }) {
  if (kind === "line") return <span className="h-[2px] w-[15px] bg-[#b3a3d3]" />;
  if (kind === "rail") return <span className="h-[3px] w-[15px] bg-[#a52c28]" />;
  if (kind === "dot") return <span className="mx-[5px] size-[7px] rounded-full border border-[#444] bg-[#8080c0]" />;
  if (kind === "trees") return <Icon name="trees" s={17} />;
  return (
    <span
      className={
        kind === "mat"
          ? "h-4 w-[17px] border border-[#8a3437] bg-[#b54a4d]"
          : "h-4 w-[17px] border border-[#a8416a] bg-[#e15989]"
      }
    />
  );
}

function Layers() {
  return (
    <section className="flex grow flex-col">
      <div className="pl-1"><PanelTitle text="Warstwy" /></div>
      <div className="mb-[3px] flex h-[26px] shrink-0 items-center pl-1">
        <button aria-label="Styling" className="flex size-[23px] items-center justify-center rounded-[2px] border border-[#b0b0b0] bg-[#dadada]">
          <Icon name="brush" s={16} />
        </button>
        <button aria-label="Add group" className="ml-[6px]"><Icon name="addGroup" s={16} /></button>
        <button aria-label="Visibility" className="ml-[10px] flex items-end"><Icon name="eye" s={17} /><Down /></button>
        <button aria-label="Filter" className="flex items-end"><Icon name="funnel" s={17} /><Down /></button>
        <button aria-label="Expression filter" className="ml-[3px] flex items-center gap-1"><Icon name="epsilon" s={18} /><Down /></button>
        <span className="grow pr-1 text-right text-base leading-4 text-[#444]">»</span>
      </div>
      <div className="grow border border-r-0 border-[#b8b8b8] bg-white">
        <ul className="grid h-[110px] auto-rows-fr">
          {layers.map((l) => (
            <li key={l.t} className={l.t === "airports" ? "flex items-center bg-[#efefef] pl-2" : "flex items-center pl-2"}>
              <span className="w-[15px] shrink-0">{l.t === "trees" && <Side />}</span>
              <Check id={"layer-" + l.t} checked={l.on} />
              <span className={l.s === "line" || l.s === "rail" ? "mr-[5px] ml-[6px] flex w-[15px] items-center" : "mr-[5px] ml-[6px] flex w-[17px] items-center"}>
                <Swatch kind={l.s} />
              </span>
              <label
                htmlFor={"layer-" + l.t}
                className={
                  l.on
                    ? l.t === "airports"
                      ? "grow text-xs font-bold underline underline-offset-2"
                      : "grow text-xs font-bold"
                    : "grow text-xs font-bold text-[#808080] italic"
                }
              >
                {l.t}
              </label>
              {l.t === "Przycięte" && (
                <span className="mr-[5px] flex size-4 items-center justify-center bg-[#f3f3f3]"><Icon name="chip" s={15} /></span>
              )}
            </li>
          ))}
        </ul>
      </div>
    </section>
  );
}

/* ---------- map ---------- */
const north: [number, number][] = [
  [432, 324], [438, 378], [582, 375], [516, 408], [777, 390], [972, 402], [474, 453], [255, 450], [711, 465], [282, 480],
  [465, 495], [762, 528], [465, 534], [432, 549], [318, 546], [96, 555], [138, 573], [603, 558], [912, 543], [906, 546],
  [930, 555], [867, 570], [867, 588], [984, 603], [759, 627], [468, 615], [1071, 639], [1125, 660], [330, 684], [480, 714],
  [645, 699], [630, 705], [363, 747], [261, 753], [843, 747], [1011, 744], [495, 798], [855, 807], [882, 801], [864, 828],
  [852, 832], [990, 825],
];
const south: [number, number][] = [
  [974, 72], [845, 78], [1151, 66], [1438, 93], [1273, 105], [1279, 111], [1329, 135], [1169, 171], [1158, 201],
  [1270, 177], [1062, 219], [951, 237], [1115, 252], [690, 291], [699, 339], [1241, 327], [1048, 381], [907, 501],
  [766, 573], [676, 624], [482, 612],
];
const airports = [
  ...north.map(([x, y]) => [780 + x / 3, 420 + y / 3]),
  ...south.map(([x, y]) => [480 + x / 2.24, 680 + y / 3]),
];

function MapCanvas() {
  return (
    <svg viewBox="183 153 1425 858" preserveAspectRatio="xMinYMin meet" className="absolute inset-0 size-full" role="img" aria-label="Alaska">
      <g fill="#e15989" stroke="#232323" strokeWidth="1" strokeLinejoin="round">
        <g transform="translate(780 420) scale(.33333)" strokeWidth="3">
          <path d="M285 825L283 812 272 808 268 795 270 785 258 775 262 765 256 760 258 745 265 735 270 740 285 715 310 695 322 680 330 655 350 650 375 668 395 660 408 648 418 640 402 630 415 635 430 645 455 645 465 630 460 600 468 590 462 575 450 570 455 560 475 553 470 545 440 550 425 560 412 560 408 570 400 555 396 562 390 548 330 552 305 540 292 530 290 505 297 485 275 490 270 478 255 462 248 450 255 438 290 420 330 403 355 395 378 392 400 394 396 410 385 415 392 435 430 438 455 445 462 437 480 434 462 425 470 415 455 405 450 390 468 378 466 370 448 372 430 368 405 355 405 320 385 295 368 275 350 262 345 250 332 245 345 240 352 225 355 208 375 212 415 212 430 205 445 185 450 160 470 130 490 116 510 118 530 108 550 88 575 82 590 88 605 80 620 68 632 50 645 55 660 68 655 80 648 88 665 92 660 75 680 68 684 85 700 92 715 85 745 88 747 95 743 108 760 115 775 122 800 113 830 110 860 118 866 127 880 122 890 130 905 125 940 137 960 132 990 120 1015 128 1035 138 1050 148 1057 145L1075 240 1115 435 1172 725V860" />
          <path d="M87 580L95 568 110 580 125 578 135 588 150 605 170 618 187 612 188 622 175 625 165 622 152 635 150 620 140 605 130 592 110 588 95 592Z" />
          <path
            fill="none"
            strokeWidth="4"
            stroke="#3a2330"
            strokeDasharray="5 9 2 6"
            d="M700 84L745 92M780 112L830 106 870 112 900 120 950 130M636 48L665 60M222 424L226 430M238 493L242 494M280 720L258 745M262 770L280 825M402 630L430 645"
          />
          <path
            fill="none"
            d="M368 275L393 280 398 267 430 272 446 275 450 268 465 270 468 277 482 272 495 280 520 284 524 277 536 285 608 292 612 297 635 297 645 305 660 307 755 307 840 303 935 293 932 260 1075 238M660 307L662 322 675 335 680 365 692 368 697 380 695 403 675 408 672 418 655 420 650 438 638 428 630 426 618 437 615 428 608 437 605 422 580 423 578 445 545 447 543 458 525 460 520 470 518 497 387 485 383 460 375 455 378 394M515 497L527 500 522 515 520 540 508 545 505 565 500 600 505 608 500 625 488 632 480 640 465 645 460 660 455 683 425 680 405 655M455 683L447 735 450 767 510 772 512 764 540 764 575 760 588 764 590 770 708 773 712 765 735 755M450 767L472 775 440 785 410 797 375 793 335 800 328 810 310 825 285 825M737 717V818M737 717H775L800 700 850 668 908 664V650L962 645 968 690 973 740 955 742 962 803 910 808 880 815M737 717L750 695 757 678 742 670 740 650 755 640 758 627 775 612 795 615 812 586 855 586 898 582M878 518L880 560 912 588 950 585 985 562 1020 545 1040 542 1032 535 1027 508 1010 515 990 514 975 520 970 508 960 505 958 495 945 495 940 503 910 515 878 518M1040 542L1048 530 1050 512 1068 500 1070 480 1095 468 1108 448 1115 436M912 588L925 600 920 625 932 640 908 655M968 678L978 676 978 665 1010 660 1015 667 1083 657 1090 670 1088 690 1098 694 1110 684 1130 695 1145 742 1172 737"
          />
        </g>
        <g transform="translate(480 680) scale(.44643 .33333)" strokeWidth="2.5">
          <path d="M868 0L868 12 885 25 888 45 873 70 885 90 900 120 905 138 930 138 955 128 965 155 968 180 958 190 962 215 962 243 985 235 1005 215 1012 228 1020 235 1028 228 1035 245 1038 260 1045 268 1052 255 1050 235 1058 232 1064 250 1072 253 1090 245 1102 238 1110 245 1098 265 1090 285 1080 320 1078 345 1060 370 1035 400 1005 420 990 435 983 460 992 470 1010 465 1030 462 1045 450 1052 432 1060 436 1070 418 1085 405 1098 402 1110 385 1115 368 1130 352 1132 340 1150 325 1165 320 1180 300 1188 288 1195 275 1205 268 1215 250 1215 235 1195 225 1190 205 1205 185 1215 178 1235 150 1238 120 1250 95 1265 80 1280 60 1300 50 1310 60 1300 72 1285 90 1265 105 1258 150 1265 185 1256 208 1268 215 1282 206 1290 208 1300 186 1310 190 1320 165 1330 158 1335 145 1350 148 1354 120 1360 135 1358 90 1366 95 1370 50 1378 75 1385 65 1390 82 1400 62 1405 78 1415 80 1420 92 1435 95 1460 108 1475 112 1485 122 1510 112 1547 108V0" />
          <path stroke="none" d="M880 -30H1547V14H880Z" />
          <path d="M885 510L895 505 905 488 920 470 940 452 965 448 972 465 985 468 1000 472 990 482 975 485 965 478 950 478 945 495 935 500 930 515 905 518 895 530 885 528ZM828 545L832 525 850 510 865 512 880 506 883 530 870 540 850 540 838 550ZM722 605L745 595 750 580 748 568 765 562 778 580 770 595 740 610ZM678 622L688 605 700 590 715 585 718 600 700 610 685 625ZM1175 345L1195 330 1202 318 1212 322 1218 300 1232 285 1240 262 1246 280 1250 290 1262 290 1245 305 1235 315 1250 340 1246 352 1230 355 1228 370 1215 370 1210 388 1200 390 1200 405 1190 400 1185 390 1182 370 1173 360ZM810 82L840 80 858 92 860 115 845 125 825 108ZM65 310L75 312 88 330 85 338 72 328ZM78 370L92 368 86 376ZM1172 428L1185 416 1198 424ZM1375 155L1382 120 1390 118 1388 140ZM982 248L985 235 995 232ZM970 515L980 495 985 508 978 515ZM340 590L340 572 350 580 352 592ZM380 612L388 592 400 600 402 612ZM785 560L790 553 798 560 790 566ZM262 528L268 523 274 528 268 534ZM538 628L544 624 550 628 544 632ZM897 562L910 562 906 568ZM1138 476L1143 470 1145 480ZM472 615L482 600 490 600 490 615Z" />
          <path
            fill="none"
            d="M885 45L910 42 920 20 935 12 950 14 960 8 985 15 1020 0M985 225L992 205 1005 185 1012 158 1030 130 1040 100 1058 73 1085 76 1092 82 1102 70 1108 78 1138 80 1138 175 1125 180 1120 190 1098 212 1100 240M1138 80H1212V38H1222V0M1222 38L1268 40 1270 52 1290 52M1212 80L1205 130 1205 170 1190 195 1175 210 1175 250 1180 257 1215 257M1188 257L1185 280 1155 300M1003 425L1008 465M1310 35L1352 30 1390 25V0M1350 32L1353 60 1348 90M1310 62L1330 75 1345 85"
          />
          <path
            fill="none"
            stroke="#3a2330"
            strokeWidth="5"
            strokeDasharray="6 3 2 4 9 2"
            d="M188 487L205 485 203 478M218 495L232 510M230 530L238 545 248 566M298 600L325 578M315 568L322 590M358 595L375 600M370 585L378 600 395 606M378 606L420 606 470 618M385 598L415 592M440 608L475 612M490 625L520 637M588 630L612 627M628 625L650 610M630 618L645 622M725 607L775 590M798 555L805 560M800 568L828 568M890 540L900 515 940 518M915 522L935 508M965 500L1000 525 1020 545M985 508L995 535M1000 515L1010 530M990 525L1015 520M1010 470L1058 440 1120 385M1005 480L1050 452M1100 445L1110 455M1180 398L1200 405 1190 380M1195 395L1230 370M1245 235L1255 236M1195 205L1225 165M1365 150L1385 120 1425 90M1370 60L1362 130M1378 100L1400 70M1470 135L1476 120M660 5L678 32M102 355L110 364M155 425L157 427M1225 300L1250 265M1218 312L1240 300M1288 208L1325 160M1130 355L1190 290M1120 375L1085 412M895 140L905 148M985 240L1010 250M1420 178L1422 180"
          />
        </g>
      </g>
      <g fill="#8886c2" stroke="#33334d" strokeWidth="1">
        {airports.map(([x, y], i) => (
          <circle key={i} cx={x} cy={y} r="3.7" />
        ))}
      </g>
      <circle cx="981.5" cy="615" r="3.7" fill="#ffff00" stroke="#7c6c20" />
    </svg>
  );
}

/* ---------- right panel ---------- */
function Styling() {
  return (
    <section className="flex w-[300px] shrink-0 flex-col">
      <PanelTitle text="Stylizacja warstw" />
      <div className="relative flex h-6 items-center">
        <select aria-label="Layer" className="size-full appearance-none rounded-[2px] border border-[#b0b0b0] bg-gradient-to-b from-white to-[#ececec] pl-6 text-xs">
          <option>airports</option>
        </select>
        <span className="pointer-events-none absolute left-2"><Icon name="points" s={14} /></span>
        <span className="pointer-events-none absolute right-2"><Down /></span>
      </div>
      <div className="mt-[7px] flex grow">
        <div className="flex w-6 shrink-0 flex-col overflow-hidden">
          <div className="flex h-8 items-center pl-[6px]"><Icon name="brush" s={18} /></div>
          <div className="flex grow flex-col gap-1 bg-[#5c5c5c] pt-1 pl-1">
            <Icon name="label" s={24} />
            <Svg s={24}><Tag fill="#5c5c5c" edge="#5c5c5c" text="abc" color="#dfe6f5" y={0} /></Svg>
          </div>
        </div>
        <div className="flex w-[14px] shrink-0 flex-col bg-[#fafafa]">
          <button aria-label="Scroll up" className="flex h-[13px] items-center justify-center border-b border-[#c4c4c4]"><Up /></button>
        </div>
        <div className="mt-[6px] ml-[3px] flex min-w-0 grow flex-col">
          <button className="flex h-6 items-center gap-[5px] rounded-l-[2px] border border-r-0 border-[#b0b0b0] bg-gradient-to-b from-white to-[#ececec] pl-[6px] text-xs">
            <Icon name="single" s={14} />
            Pojedynczy symbol
          </button>
          <div className="mt-[7px] flex grow">
            <div className="flex w-[107px] justify-center pt-[18px] pr-[6px]"><div className="w-[2px] bg-[#c8c8c8]" /></div>
            <div className="w-[97px] overflow-hidden border-x border-[#b8b8b8] bg-white text-xs">
              <div className="flex h-[19px] items-center bg-[#efefef] pl-[6px] font-bold">
                <Down />
                <span className="mx-[12px] size-[9px] shrink-0 rounded-full border border-[#444] bg-[#8886c2]" />
                Znacznik
              </div>
              <div className="flex h-[18px] items-center pl-[48px]">
                <span className="mr-[9px] size-[9px] shrink-0 rounded-full border border-[#444] bg-[#8886c2]" />
                zwy...
              </div>
            </div>
            <div className="ml-[6px] flex flex-col gap-[6px]">
              <button aria-label="Add symbol layer" className="flex size-[23px] items-center justify-center rounded-[2px] border border-[#b8b8b8] bg-[#f7f7f7]"><Icon name="plus" s={15} /></button>
              <button aria-label="Remove symbol layer" className="flex size-[23px] items-center justify-center rounded-[2px] border border-[#d4d4d4] bg-[#f4f4f4]" />
            </div>
            <div className="ml-[7px] h-[23px] w-1 self-start border border-r-0 border-[#ccc]" />
          </div>
        </div>
        <div className="mt-[6px] w-[13px] shrink-0 bg-[#fafafa]">
          <button aria-label="Scroll up" className="flex h-[13px] w-full items-center justify-center border-b border-[#c4c4c4]"><Up /></button>
        </div>
      </div>
    </section>
  );
}

/* ---------- Group Stats dialog ---------- */
const fields: [string, string][] = [
  ["ELEV", "pie"], ["fk_region", "pie"], ["ID", "pie"], ["NAME", "note"], ["USE", "note"], ["average", "bars"],
  ["count", "bars"], ["max", "bars"], ["median", "bars"], ["min", "bars"], ["stand.dev.", "bars"], ["sum", "bars"],
];

function FieldRow({ name, icon }: { name: string; icon: string }) {
  return (
    <li className={name === "USE" ? "flex min-h-[26px] items-center gap-2 pl-1 text-xs group-data-[list=fields]:bg-[#efefef]" : "flex min-h-[26px] items-center gap-2 pl-1 text-xs"}>
      <Icon name={icon} s={22} />
      {name}
    </li>
  );
}

const results: [string, string, string][] = [
  ["2", "Military", "1461"],
  ["3", "Other", "1432,5"],
  ["4", "Civilian/Public", "1506"],
];

function Dialog() {
  return (
    <div role="dialog" aria-label="Group Stats" className="absolute top-[254px] left-[1170px] flex h-[752px] w-[810px] flex-col border border-[#6a6a6a] bg-[#f0f0f0] text-[11px] shadow-[0_2px_16px_rgba(0,0,0,0.45)]">
      <header className="flex h-[30px] shrink-0 items-center bg-white pl-2 text-xs">
        <Icon name="qgis" s={16} />
        <h1 className="ml-[5px] grow">Group Stats</h1>
        <button aria-label="Minimize" className="flex w-[46px] justify-center"><span className="h-px w-[10px] bg-black" /></button>
        <button aria-label="Maximize" className="flex w-[46px] justify-center"><span className="size-[10px] border border-black" /></button>
        <button aria-label="Close" className="flex w-[46px] justify-center">×</button>
      </header>
      <nav className="flex h-[21px] shrink-0 items-center gap-3 border-b border-[#d8d8d8] pt-[2px] pl-[10px] text-xs">
        <Menu text="Data" at={0} />
        <Menu text="Features" at={4} />
        <Menu text="Window" at={1} />
        <Menu text="Help" at={2} />
      </nav>
      <div className="flex grow pr-[9px] pb-8">
        <div className="mt-[9px] ml-[9px] flex w-[479px] shrink-0 border border-[#b0b0b0] bg-white">
          <div className="grow bg-[linear-gradient(to_right,#f0f0f0_10px,transparent_10px),linear-gradient(to_bottom,#f0f0f0_21px,white_21px)]">
            <table className="table-fixed border-collapse text-xs">
              <thead>
                <tr className="h-[21px] bg-gradient-to-b from-white to-[#ececec] leading-4">
                  <th className="w-[10px] border-b border-[#b0b0b0]" />
                  <th className="relative w-[82px] border-r border-b border-[#b0b0b0] pr-3">
                    1<span className="absolute top-[5px] right-1"><Up /></span>
                  </th>
                  <th className="w-[43px] border-b border-[#b0b0b0]">2</th>
                </tr>
              </thead>
              <tbody>
                <tr className="h-[30px]">
                  <th className="border border-l-0 border-[#b8b8b8] bg-[#f7f7f7] align-top font-normal">1</th>
                  <th className="border border-[#c8c4c4] bg-[#f5eaea] px-[2px] text-left">USE</th>
                  <td className="border border-[#c8c4c4] bg-[#f5eaea]" />
                </tr>
                {results.map(([n, use, v]) => (
                  <tr key={n} className={n === "2" ? "h-[30px] text-white" : "h-[30px]"}>
                    <th className={n === "2" ? "border border-l-0 border-[#b8b8b8] bg-[#f7f7f7] text-black" : "border border-l-0 border-[#b8b8b8] bg-[#f7f7f7] font-normal"}>{n}</th>
                    <td className={n === "2" ? "border border-[#c8c4c4] bg-[#0f83e0] px-[2px]" : "border border-[#c8c4c4] bg-[#f5eaea] px-[2px] whitespace-nowrap"}>{use}</td>
                    <td className={n === "2" ? "border border-[#c8c4c4] bg-[#0078d7] px-[2px] text-right" : "border border-[#c8c4c4] bg-white px-[2px] text-right"}>{v}</td>
                  </tr>
                ))}
              </tbody>
            </table>
          </div>
        </div>
        <div className="flex w-[19px] items-center justify-center pl-1"><div className="h-4 border-l border-dotted border-[#999]" /></div>
        <div className="flex min-w-0 grow flex-col pt-[3px]">
          <h2 className="h-[18px] text-xs">Control panel</h2>
          <div className="flex flex-col pt-[7px] pl-[5px]">
            <label htmlFor="layers" className="h-[21px]">Layers</label>
            <select id="layers" className="h-[22px] shrink-0 appearance-none rounded-[2px] border border-[#b0b0b0] bg-gradient-to-b from-white to-[#ececec] px-1">
              <option>airports</option>
            </select>
            <h3 className="mt-[5px] h-[21px]">Fields</h3>
            <div className="h-[307px] overflow-hidden border border-[#b0b0b0] bg-white">
              <ul data-list="fields" className="group grid h-[317px] auto-rows-fr">
                {fields.map(([n, i]) => <FieldRow key={n} name={n} icon={i} />)}
              </ul>
            </div>
            <div className="mt-[6px] grid grid-cols-2 gap-x-[7px]">
              <div className="flex h-[28px] items-start">
                <button className="h-[22px] rounded-[2px] border border-[#b0b0b0] bg-gradient-to-b from-white to-[#ececec] px-[7px]">Filter</button>
              </div>
              <h3 className="flex h-[22px] items-center">Columns</h3>
              <textarea aria-label="Filter" defaultValue={'"ELEV" > 1400'} className="h-[70px] resize-none border-b border-l border-[#b8b8b8] bg-white px-1 py-1" />
              <ul className="h-[70px] border-b border-l border-[#b8b8b8] bg-white" />
              <h3 className="flex h-[34px] items-center">Rows</h3>
              <div className="flex h-[34px] items-center">
                Value
                <span className="ml-[6px] flex items-center gap-[5px]">
                  <Check id="use-null" />
                  <label htmlFor="use-null" className="whitespace-nowrap">use NULL</label>
                </span>
              </div>
              <ul className="h-[70px] border-l border-[#b8b8b8] bg-white"><FieldRow name="USE" icon="note" /></ul>
              <ul className="h-[70px] border-l border-[#b8b8b8] bg-white">
                <FieldRow name="ELEV" icon="pie" />
                <FieldRow name="average" icon="bars" />
              </ul>
            </div>
            <div className="mt-[7px] flex h-[22px] items-center gap-[5px]">
              <Check id="only-selected" />
              <label htmlFor="only-selected" className="grow">Use only selected features</label>
              <button className="h-[22px] w-[82px] rounded-[2px] border border-[#b0b0b0] bg-gradient-to-b from-white to-[#ececec]">Clear</button>
            </div>
            <button className="mt-[5px] h-[22px] rounded-[2px] border border-[#b0b0b0] bg-gradient-to-b from-white to-[#ececec]">Calculate</button>
          </div>
        </div>
      </div>
    </div>
  );
}

/* ---------- status bar ---------- */
function Spin({ id, value }: { id: string; value: string }) {
  return (
    <span className="flex h-[21px] w-[84px] rounded-[2px] border border-[#b0b0b0] bg-white">
      <input id={id} defaultValue={value} className="w-[68px] min-w-0 border-r border-[#b8b8b8] px-[5px]" />
      <span className="flex grow flex-col items-center justify-center gap-[3px] bg-[#f4f4f4]"><Up /><Down /></span>
    </span>
  );
}

function StatusBar() {
  return (
    <footer className="flex h-[28px] shrink-0 items-center bg-[#f0f0f0] pl-1 text-[11px] whitespace-nowrap">
      <div className="relative flex items-center">
        <span className="absolute left-2"><Icon name="statusSearch" s={13} /></span>
        <input aria-label="Szukana fraza" placeholder="Szukana fraza (Ctrl+K)" className="h-[22px] w-[202px] rounded-[2px] border border-[#b0b0b0] bg-white pl-7 placeholder:text-[#808080]" />
      </div>
      <span className="ml-2 grow whitespace-pre">{"1 obiekt zaznaczony na warstwie (airports) (KALAKAKET CREEK  AS)."}</span>
      <div className="flex w-[845px] shrink-0 items-center">
        <label htmlFor="coords" className="w-[68px]">Współrzędne</label>
        <input id="coords" defaultValue="2047192  4777747" className="h-[21px] w-[111px] rounded-[2px] border border-[#b0b0b0] bg-white text-center" />
        <span className="flex w-[34px] pl-1">
          <Svg s={16}>
            <path d="M4 6C7 1 13 3 12 8L17 14C21 18 17 23 13 22L4 12Z" fill="#eee" stroke="#333" strokeWidth="1.5" />
            <path d="M3 3L21 21M7 14L14 6M10 18L18 10M18 2L15 6M21 5L17 8" stroke="#333" strokeWidth="1.5" />
          </Svg>
        </span>
        <label htmlFor="scale" className="w-[29px]">Skala</label>
        <span className="flex h-[21px] w-[80px] border border-[#b0b0b0] bg-white">
          <input id="scale" defaultValue=":16384000" className="min-w-0 grow pr-[3px] text-right" />
          <button aria-label="Scales" className="flex w-[19px] shrink-0 items-center justify-center border-l border-[#b8b8b8] bg-[#f4f4f4]"><Down /></button>
        </span>
        <span className="flex w-[35px] justify-center pl-1">
          <svg width="12" height="16" viewBox="0 0 12 16"><path d="M3 8V4.5A3 3 0 0 1 9 4.5V8" stroke="#666" strokeWidth="1.8" fill="none" /><path d="M0 7H12V15.5H0Z" fill="#5a5a5a" /></svg>
        </span>
        <label htmlFor="magnifier" className="w-[68px]">Powiększenie</label>
        <Spin id="magnifier" value="100%" />
        <label htmlFor="rotation" className="w-[48px] pl-[11px]">Obrót</label>
        <Spin id="rotation" value="0,0 °" />
        <span className="ml-[7px] flex items-center gap-[5px]">
          <Check id="render" checked />
          <label htmlFor="render">Renderuj</label>
        </span>
        <button className="ml-auto flex items-center gap-1">
          <Svg s={14}>
            <circle cx="12" cy="12" r="10.5" fill="#888" stroke="#555" />
            <path d="M2 8H22M2 16H22M12 2V22M7 3C4 9 4 15 7 21M17 3C20 9 20 15 17 21" stroke="#e5e5e5" strokeWidth="1.3" />
          </Svg>
          EPSG:2964
        </button>
        <button aria-label="Messages" className="mr-[7px] ml-6">
          <Svg s={16}>
            <path d="M12 2C5 2 1 6 1 11C1 16 5 19 12 19L21 23L19 17C22 15 23 13 23 11C23 6 19 2 12 2Z" fill="#555" />
            <path d="M6 10H9V13H6ZM11 10H14V13H11ZM16 10H19V13H16Z" fill="#fff" />
          </Svg>
        </button>
      </div>
    </footer>
  );
}

/* ---------- Windows task bar ---------- */
function TaskButton({ label, on, children }: { label: string; on?: boolean; children: ReactNode }) {
  return (
    <button aria-label={label} className={on ? "flex h-10 w-[49px] flex-col items-center border-r border-[#c8c4b4] bg-[#f3f0e6]" : "flex h-10 w-[49px] flex-col items-center"}>
      <span className="flex grow items-center">{children}</span>
      <span className={on ? "h-[2px] w-full bg-[#0078d7]" : "h-[2px] w-10 bg-[#0078d7]"} />
    </button>
  );
}

function TaskBar() {
  return (
    <footer className="flex h-10 shrink-0 items-center bg-[linear-gradient(to_right,#dedddb_0%,#e0dac6_18%,#dcd5c0_31%,#d4d3c6_36%,#ddd5cc_42%,#eadfca_54%,#efe8c8_58%,#dcdad8_63%,#d9d7d4_82%,#e9dfc9_90%,#e6e1d8_94%,#dadada_100%)] text-[#222]">
      <button aria-label="Start" className="flex h-10 w-[49px] items-center justify-center">
        <svg width="16" height="16" viewBox="0 0 16 16"><path d="M0 2.3L7 1.2V7.5H0ZM8 1L16 0V7.5H8ZM0 8.5H7V14.8L0 13.7ZM8 8.5H16V16L8 15Z" fill="#000" /></svg>
      </button>
      <label className="flex h-10 w-[291px] items-center border border-[#c8c8c8] bg-white pl-3 text-black">
        <Icon name="search" s={20} />
        <input type="search" placeholder="Wyszukaj" className="ml-[13px] min-w-0 grow text-[15px] placeholder:text-[#3c3c3c]" />
      </label>
      <button aria-label="Task view" className="flex w-[51px] justify-center">
        <svg width="17" height="16" viewBox="0 0 17 16" fill="none" stroke="#111" strokeWidth="1.3">
          <path d="M1 1V3H11V1M1 15V13H11V15M1 5H11V11H1ZM15 1V4M15 9V15" />
          <path d="M14 5H16V8H14Z" fill="#111" />
        </svg>
      </button>
      <TaskButton label="Explorer">
        <Svg>
          <path d="M1 3H10L12 5H23V9H1Z" fill="#d9980d" />
          <path d="M1 6H23V20H1Z" fill="#ffd357" />
          <path d="M5 22V13H19V22H15V17H9V22Z" fill="#3e8ede" />
        </Svg>
      </TaskButton>
      <TaskButton label="Chrome">
        <Svg>
          <circle cx="12" cy="12" r="11.5" fill="#34a853" />
          <path d="M12 12L2 6A11.5 11.5 0 0 1 22.5 7Z" fill="#ea4335" />
          <path d="M12 7H22.5A11.5 11.5 0 0 1 12 23.5L17 13Z" fill="#fbbc05" />
          <circle cx="12" cy="12" r="5.6" fill="#fff" />
          <circle cx="12" cy="12" r="4.4" fill="#4285f4" />
          <circle cx="17.5" cy="17.5" r="6.5" fill="#bf360c" />
          <text x="17.5" y="20.5" fontSize="8" fill="#fff" textAnchor="middle" fontFamily="Open Sans, sans-serif">M</text>
        </Svg>
      </TaskButton>
      <TaskButton label="Discord">
        <Svg>
          <circle cx="12" cy="12" r="11.5" fill="#5865f2" />
          <path d="M5 16C5 11 6 8 7.5 7L10.5 6.5L11 8H13L13.5 6.5L16.5 7C18 8 19 11 19 16L16 18L15 16H9L8 18Z" fill="#fff" />
          <circle cx="9.5" cy="12.5" r="1.4" fill="#5865f2" />
          <circle cx="17.5" cy="17.5" r="6.5" fill="#ef4f4f" />
          <text x="17.5" y="20.5" fontSize="9" fill="#fff" textAnchor="middle" fontFamily="Open Sans, sans-serif">9+</text>
        </Svg>
      </TaskButton>
      <TaskButton label="QGIS" on><Icon name="qgis" /></TaskButton>
      <TaskButton label="Media player">
        <Svg>
          <circle cx="12" cy="12" r="11" fill="#2b2b2b" stroke="#e8813a" strokeWidth="2" />
          <path d="M22 7A11 11 0 0 1 6 21" stroke="#8a6bd0" strokeWidth="2" />
          <path d="M9 6.5L18 12L9 17.5Z" fill="#fff" />
        </Svg>
      </TaskButton>
      <div className="grow" />
      <div className="flex items-center text-sm">
        <Svg s={26}>
          <path d="M5 14A4.5 4.5 0 0 1 5 6A6.5 6.5 0 0 1 17 5A5 5 0 0 1 19 14Z" fill="#9db1d6" />
          <path d="M1 17.5H16M18 17.5H23M1 21.5H23" stroke="#6f8fc4" strokeWidth="1.8" />
          <circle cx="18" cy="6" r="5.8" fill="#c42b1c" />
          <text x="18" y="9" fontSize="9" fill="#fff" textAnchor="middle" fontFamily="Open Sans, sans-serif">1</text>
        </Svg>
        <span className="mx-2 w-7">-1°C</span>
        <span className="w-[56px]">Mgła</span>
      </div>
      <div className="flex items-center gap-[9px]">
        <svg width="13" height="8" viewBox="0 0 13 8" fill="none" stroke="#111" strokeWidth="1.4"><path d="M1 7L6.5 1.5L12 7" /></svg>
        <svg width="14" height="17" viewBox="0 0 14 17" fill="none" stroke="#111" strokeWidth="1.4"><path d="M4 2H10V10H4Z" fill="#111" /><path d="M1.5 8V12H12.5V8M7 12V16M4 16H10" /></svg>
        <svg width="14" height="17" viewBox="0 0 14 17" fill="none" stroke="#111" strokeWidth="1.3"><path d="M2 5H9V12H2ZM9 7L13 5V12L9 10M3 2Q6 0 9 2M3 15Q6 17 9 15" /></svg>
        <svg width="18" height="17" viewBox="0 0 18 17" fill="none" stroke="#111" strokeWidth="1.3"><path d="M1 4L16 1V14H1ZM6 11V7H9M12 5V9H9" /><circle cx="13.5" cy="13" r="3.5" fill="#f7941d" stroke="none" /></svg>
        <svg width="16" height="14" viewBox="0 0 16 14" fill="none" stroke="#111" strokeWidth="1.2"><path d="M1 5H3L6 2V12L3 9H1ZM8 5Q9.5 7 8 9M10.5 3.5Q13 7 10.5 10.5M13 2Q16.5 7 13 12" /></svg>
      </div>
      <div className="w-[70px] pl-1 text-center text-[11px] leading-[18px]">
        <div>20:58</div>
        <div>01.12.2024</div>
      </div>
      <button aria-label="Notifications" className="mr-[19px] ml-[9px] flex">
        <svg width="26" height="26" viewBox="0 0 26 26">
          <path d="M1 3H17V14H9L6 18V14H1Z" fill="#000" />
          <path d="M4 6H14M4 8.5H14M4 11H10" stroke="#fff" />
          <circle cx="16.5" cy="17.5" r="7.5" fill="#d8d8d8" fillOpacity="0.85" stroke="#777" />
          <text x="16.5" y="22" fontSize="12" textAnchor="middle" fill="#111" fontFamily="Open Sans, sans-serif">1</text>
        </svg>
      </button>
    </footer>
  );
}

const group1 = ["newProject", "open", "save", "layout", "layouts", "styles"];
const group2 = ["hand", "panSel", "zoomIn", "zoomOut", "zoomFull", "zoomSel", "zoomLayer", "zoomNative", "zoomLast", "zoomNext", "newMap", "new3d", "bookmarkNew", "bookmarks", "clock", "refresh"];

export default function App() {
  return (
    <div className="relative flex h-screen flex-col overflow-hidden bg-[#f0f0f0] font-['Open_Sans','Noto_Sans',sans-serif] text-black">
      <header className="flex h-[23px] shrink-0 items-center bg-white pl-[2px] text-xs text-[#8a8a8a]">
        <Icon name="qgis" s={17} />
        <h1 className="ml-1 grow">*Projekt bez nazwy — QGIS</h1>
        <button aria-label="Minimize" className="flex w-[46px] justify-center"><span className="h-px w-[10px] bg-[#999]" /></button>
        <button aria-label="Restore" className="flex w-[46px] justify-center">
          <svg width="10" height="10" viewBox="0 0 10 10" fill="none" stroke="#999"><path d="M.5 2.5H7.5V9.5H.5ZM2.5 2.5V.5H9.5V7.5H7.5" /></svg>
        </button>
        <button aria-label="Close" className="mr-[2px] flex w-[46px] justify-center">
          <svg width="10" height="10" viewBox="0 0 10 10" stroke="#999"><path d="M0 0L10 10M10 0L0 10" /></svg>
        </button>
      </header>
      <nav className="flex h-[21px] shrink-0 items-center gap-3 border-b border-[#d8d8d8] pt-[2px] pl-[10px] text-xs text-[#9a9a9a]">
        {menus.map(([t, a]) => <Menu key={t} text={t} at={a} />)}
      </nav>
      <div className="flex h-[39px] shrink-0 items-center border-b border-[#b0b0b0] bg-gradient-to-b from-[#f9f9f9] to-[#ececec]">
        <div className="-ml-1"><Handle /></div>
        <div className="grid w-[201px] grid-cols-6">{group1.map((n) => <Tool key={n} name={n} />)}</div>
        <Handle />
        <div className="grid w-[534px] grid-cols-16">{group2.map((n) => <Tool key={n} name={n} on={n === "hand"} />)}</div>
        <Handle />
        {["select", "selForm", "deselect", "selLoc"].map((n) => <Tool key={n} name={n} drop />)}
        <Handle />
        {["identify", "abacus", "gear", "sigma"].map((n) => <Tool key={n} name={n} />)}
        <Tool name="table" drop />
        <Tool name="ruler" drop />
        <Tool name="tip" />
        <Tool name="action" drop pale />
      </div>
      <div className="flex h-10 shrink-0 items-center border-b border-[#b0b0b0] bg-gradient-to-b from-[#f9f9f9] to-[#ececec]">
        <div className="-ml-1"><Handle /></div>
        <div className="grid w-[235px] grid-cols-7">
          {["dataSrc", "geopackageNew", "newShape", "featherNew", "memory", "mesh", "virtual"].map((n) => <Tool key={n} name={n} />)}
        </div>
        <Handle />
        {["pencils", "pencil", "saveGrey"].map((n) => <Tool key={n} name={n} />)}
        <Tool name="lineGrey" drop />
        <Tool name="pointsGrey" />
        <Tool name="vertexGrey" drop />
        <div className="grid w-[233px] grid-cols-7">
          {["attrGrey", "trashGrey", "cutGrey", "copy", "pasteGrey", "undo", "redo"].map((n) => <Tool key={n} name={n} />)}
        </div>
        <Handle />
        <Tool name="label" />
        <Tool name="diagram" />
        <div className="mx-1 h-6 w-px bg-[#ccc]" />
        <Tool name="labelPin" />
        <Tool name="labelRed" />
        <div className="mx-1 h-6 w-px bg-[#ccc]" />
        {["lg1", "lg2", "lg3", "lg4", "lg5"].map((n) => <Tool key={n} name={n} />)}
        <Handle />
        <Tool name="metasearch" />
        <Handle />
        <Tool name="python" />
        <Handle />
        <Tool name="help" />
        <Handle />
        <Tool name="groupStats" />
      </div>
      <main className="flex min-h-0 grow border-b border-[#b8b8b8]">
        <aside className="flex w-[175px] shrink-0 flex-col">
          <Browser />
          <div className="flex h-[7px] shrink-0 items-center justify-center"><div className="w-4 border-t border-dotted border-[#999]" /></div>
          <Layers />
        </aside>
        <div className="w-[7px] shrink-0" />
        <div className="flex min-w-0 grow flex-col bg-white">
          <div className="flex h-[30px] shrink-0 items-center border border-[#9fb89a] bg-[#dff0d8] pl-[9px] text-[11px]">
            <svg width="24" height="18" viewBox="0 0 24 18"><path d="M1 3L5 2L8 9L22 1L8 17Z" fill="#2edb1f" stroke="#1a7a12" /></svg>
            <p className="ml-[10px] grow pt-px">
              <b>Warstwa wyeksportowana:</b> Zapisano warstwę wektorową do{" "}
              <a href="#" className="text-[#2a8a1f] underline">C:\Users\micha\Documents\Matanuska.shp</a>
            </p>
            <button aria-label="Close message" className="mr-[22px]">
              <Svg s={17}>
                <circle cx="12" cy="12" r="11.5" fill="#333" />
                <path d="M7 7L17 17M17 7L7 17" stroke="#fff" strokeWidth="3.5" />
              </Svg>
            </button>
          </div>
          <div className="relative ml-px grow"><MapCanvas /></div>
        </div>
        <div className="w-[10px] shrink-0" />
        <Styling />
        <div className="w-[2px] shrink-0" />
      </main>
      <StatusBar />
      <TaskBar />
      <Dialog />
      <div className="pointer-events-none absolute right-[82px] bottom-[89px] text-[#8a8a8a]/60">
        <p className="text-[19px] leading-[26px]">Aktywuj system Windows</p>
        <p className="text-sm leading-5">Przejdź do ustawień, aby aktywować system Windows.</p>
      </div>
    </div>
  );
}
